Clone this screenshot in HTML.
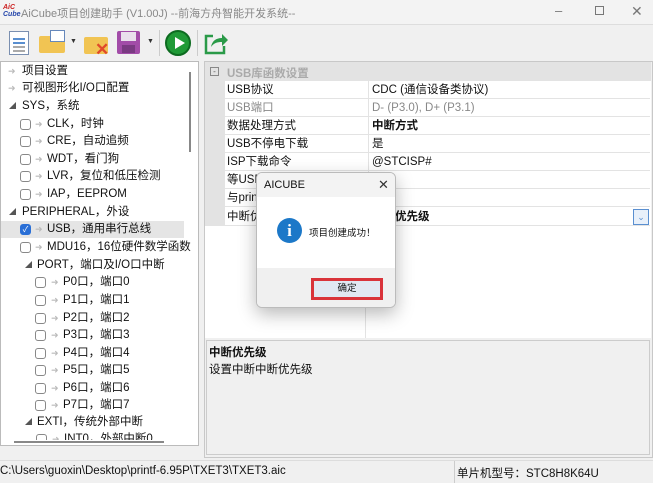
<!DOCTYPE html>
<html><head><meta charset="utf-8">
<style>
*{margin:0;padding:0;box-sizing:border-box}
body{width:653px;height:483px;overflow:hidden;background:#f0f0f0;font-family:"Liberation Sans","Microsoft YaHei","Noto Sans CJK SC",sans-serif;font-size:11.5px;color:#111;position:relative}
.a{position:absolute;white-space:nowrap}
.row{position:absolute;height:17px;line-height:17px;white-space:nowrap}
.cb{position:absolute;width:11px;height:11px;border:1px solid #888;border-radius:3px;background:#fff;top:3px}
.ar{position:absolute;color:#bbb;font-size:9px;top:0}
.tri{position:absolute;color:#555;font-size:7px;top:0}
.pr{position:absolute;left:225px;width:425px;height:18px;border-bottom:1px solid #e3e3e3;line-height:18px;background:#fff}
.pr .l{position:absolute;left:2px}
.pr .v{position:absolute;left:143px;border-left:1px solid #e3e3e3;height:18px;padding-left:3px}
</style></head><body>
<div class="a" style="left:0;top:0;width:653px;height:25px;background:#f3f3f3;border-bottom:1px solid #ddd"></div>
<div class="a" style="left:3px;top:4px;font-size:7px;line-height:7px;color:#c22;font-weight:bold;font-style:italic">AiC<br><span style="color:#24a">Cube</span></div>
<div class="a" style="left:21px;top:5px;font-size:11px;color:#888">AiCube项目创建助手 (V1.00J) --前海方舟智能开发系统--</div>
<div class="a" style="left:555px;top:3px;color:#777;font-size:13px">–</div>
<div class="a" style="left:595px;top:6px;width:9px;height:9px;border:1px solid #777"></div>
<div class="a" style="left:631px;top:3px;color:#777;font-size:14px">✕</div>
<div class="a" style="left:9px;top:31px;width:20px;height:24px;background:#fff;border:1px solid #7a8fb0"></div>
<div class="a" style="left:13px;top:38px;width:12px;height:2px;background:#5a8fd0;box-shadow:0 4px #5a8fd0,0 8px #aaa,0 12px #aaa"></div>
<div class="a" style="left:39px;top:36px;width:26px;height:17px;background:#f1c453;border-radius:2px"></div>
<div class="a" style="left:50px;top:30px;width:15px;height:12px;background:#fff;border:1px solid #68b"></div>
<div class="a" style="left:70px;top:38px;font-size:7px;color:#333">▼</div>
<div class="a" style="left:84px;top:37px;width:24px;height:17px;background:#f1c453;border-radius:2px"></div>
<div class="a" style="left:95px;top:40px;color:#e04a2a;font-size:17px;font-weight:bold">✕</div>
<div class="a" style="left:117px;top:31px;width:23px;height:23px;background:#a24ca8;border-radius:2px"></div>
<div class="a" style="left:121px;top:32px;width:15px;height:9px;background:#e9e0ec"></div>
<div class="a" style="left:122px;top:45px;width:13px;height:8px;background:#7a3a82"></div>
<div class="a" style="left:147px;top:38px;font-size:7px;color:#333">▼</div>
<div class="a" style="left:159px;top:30px;width:1px;height:26px;background:#ccc"></div>
<div class="a" style="left:165px;top:30px;width:26px;height:26px;border-radius:50%;background:#1f9a36;border:2px solid #0d6b20"></div>
<div class="a" style="left:175px;top:37px;width:0;height:0;border-left:10px solid #fff;border-top:6px solid transparent;border-bottom:6px solid transparent"></div>
<div class="a" style="left:197px;top:30px;width:1px;height:26px;background:#ccc"></div>
<svg class="a" style="left:203px;top:30px" width="26" height="26" viewBox="0 0 26 26"><path d="M10 6H3v17h18v-7" fill="none" stroke="#2a9a48" stroke-width="2.5"/><path d="M8 17c1-6 5-9 11-9V4l6 6-6 6v-4c-5 0-8 1-11 5z" fill="#2a9a48"/></svg>
<div class="a" style="left:0;top:61px;width:199px;height:385px;background:#fff;border:1px solid #bbb"></div>
<div class="a" style="left:189px;top:72px;width:2px;height:80px;background:#888"></div>
<div class="a" style="left:14px;top:441px;width:150px;height:2px;background:#888"></div>
<div style="font-size:11.5px">
<div class="row" style="top:63px;left:0"><span class="ar" style="left:8px">➜</span><span class="a" style="left:22px">项目设置</span></div>
<div class="row" style="top:80px;left:0"><span class="ar" style="left:8px">➜</span><span class="a" style="left:22px">可视图形化I/O口配置</span></div>
<div class="row" style="top:98px;left:0"><span class="tri" style="left:9px">◢</span><span class="a" style="left:22px">SYS，系统</span></div>
<div class="row" style="top:116px;left:0"><span class="cb" style="left:20px"></span><span class="ar" style="left:35px">➜</span><span class="a" style="left:47px">CLK，时钟</span></div>
<div class="row" style="top:133px;left:0"><span class="cb" style="left:20px"></span><span class="ar" style="left:35px">➜</span><span class="a" style="left:47px">CRE，自动追频</span></div>
<div class="row" style="top:151px;left:0"><span class="cb" style="left:20px"></span><span class="ar" style="left:35px">➜</span><span class="a" style="left:47px">WDT，看门狗</span></div>
<div class="row" style="top:168px;left:0"><span class="cb" style="left:20px"></span><span class="ar" style="left:35px">➜</span><span class="a" style="left:47px">LVR，复位和低压检测</span></div>
<div class="row" style="top:186px;left:0"><span class="cb" style="left:20px"></span><span class="ar" style="left:35px">➜</span><span class="a" style="left:47px">IAP，EEPROM</span></div>
<div class="row" style="top:204px;left:0"><span class="tri" style="left:9px">◢</span><span class="a" style="left:22px">PERIPHERAL，外设</span></div>
<div class="a" style="left:1px;top:221px;width:183px;height:17px;background:#e5e5e5"></div>
<div class="row" style="top:221px;left:0"><span class="cb" style="left:20px;background:#2a6fd6;border-color:#2a6fd6;color:#fff;font-size:8px;line-height:9px;text-align:center">✓</span><span class="ar" style="left:35px">➜</span><span class="a" style="left:47px">USB，通用串行总线</span></div>
<div class="row" style="top:239px;left:0"><span class="cb" style="left:20px"></span><span class="ar" style="left:35px">➜</span><span class="a" style="left:47px">MDU16，16位硬件数学函数</span></div>
<div class="row" style="top:257px;left:0"><span class="tri" style="left:25px">◢</span><span class="a" style="left:37px">PORT，端口及I/O口中断</span></div>
<div class="row" style="top:274px;left:0"><span class="cb" style="left:35px"></span><span class="ar" style="left:51px">➜</span><span class="a" style="left:63px">P0口，端口0</span></div>
<div class="row" style="top:292px;left:0"><span class="cb" style="left:35px"></span><span class="ar" style="left:51px">➜</span><span class="a" style="left:63px">P1口，端口1</span></div>
<div class="row" style="top:310px;left:0"><span class="cb" style="left:35px"></span><span class="ar" style="left:51px">➜</span><span class="a" style="left:63px">P2口，端口2</span></div>
<div class="row" style="top:327px;left:0"><span class="cb" style="left:35px"></span><span class="ar" style="left:51px">➜</span><span class="a" style="left:63px">P3口，端口3</span></div>
<div class="row" style="top:345px;left:0"><span class="cb" style="left:35px"></span><span class="ar" style="left:51px">➜</span><span class="a" style="left:63px">P4口，端口4</span></div>
<div class="row" style="top:362px;left:0"><span class="cb" style="left:35px"></span><span class="ar" style="left:51px">➜</span><span class="a" style="left:63px">P5口，端口5</span></div>
<div class="row" style="top:380px;left:0"><span class="cb" style="left:35px"></span><span class="ar" style="left:51px">➜</span><span class="a" style="left:63px">P6口，端口6</span></div>
<div class="row" style="top:397px;left:0"><span class="cb" style="left:35px"></span><span class="ar" style="left:51px">➜</span><span class="a" style="left:63px">P7口，端口7</span></div>
<div class="row" style="top:414px;left:0"><span class="tri" style="left:25px">◢</span><span class="a" style="left:37px">EXTI，传统外部中断</span></div>
<div class="a" style="left:1px;top:431px;width:197px;height:9px;overflow:hidden"><div class="row" style="top:0;left:0"><span class="cb" style="left:35px"></span><span class="ar" style="left:51px">➜</span><span class="a" style="left:63px">INT0，外部中断0</span></div></div>
</div>
<div class="a" style="left:204px;top:61px;width:449px;height:397px;border:1px solid #c8c8c8;background:#f0f0f0"></div>
<div class="a" style="left:205px;top:62px;width:446px;height:276px;background:#fff"></div>
<div class="a" style="left:205px;top:62px;width:446px;height:19px;background:#e3e3e3"></div>
<div class="a" style="left:205px;top:81px;width:20px;height:145px;background:#e3e3e3"></div>
<div class="a" style="left:210px;top:67px;width:9px;height:9px;border:1px solid #888;font-size:8px;line-height:7px;text-align:center;color:#555">-</div>
<div class="a" style="left:227px;top:65px;color:#aaa;font-weight:bold">USB库函数设置</div>
<div class="pr" style="top:81px"><span class="l">USB协议</span><span class="v">CDC (通信设备类协议)</span></div>
<div class="pr" style="top:99px;color:#888"><span class="l">USB端口</span><span class="v">D- (P3.0), D+ (P3.1)</span></div>
<div class="pr" style="top:117px"><span class="l">数据处理方式</span><span class="v" style="font-weight:bold">中断方式</span></div>
<div class="pr" style="top:135px"><span class="l">USB不停电下载</span><span class="v">是</span></div>
<div class="pr" style="top:153px"><span class="l">ISP下载命令</span><span class="v">@STCISP#</span></div>
<div class="pr" style="top:171px"><span class="l">等USB</span><span class="v"></span></div>
<div class="pr" style="top:189px"><span class="l">与prin</span><span class="v"></span></div>
<div class="pr" style="top:208px"><span class="l">中断优</span><span class="v" style="font-weight:bold">中断优先级</span></div>
<div class="a" style="left:633px;top:209px;width:16px;height:16px;border:1px solid #5a8fd0;background:#e8f0fa;color:#5a8fd0;font-size:9px;text-align:center;line-height:14px">⌄</div>
<div class="a" style="left:365px;top:226px;width:1px;height:112px;background:#e3e3e3"></div>
<div class="a" style="left:206px;top:340px;width:444px;height:115px;border:1px solid #ccc;background:#f0f0f0"></div>
<div class="a" style="left:209px;top:344px;font-weight:bold">中断优先级</div>
<div class="a" style="left:209px;top:361px">设置中断中断优先级</div>
<div class="a" style="left:0;top:460px;width:653px;height:23px;background:#f0f0f0;border-top:1px solid #ddd"></div>
<div class="a" style="left:454px;top:461px;width:1px;height:22px;background:#ccc"></div>
<div class="a" style="left:0;top:465px">C:\Users\guoxin\Desktop\printf-6.95P\TXET3\TXET3.aic</div>
<div class="a" style="left:457px;top:465px">单片机型号：STC8H8K64U</div>
<div class="a" style="left:256px;top:172px;width:140px;height:136px;background:#fff;border:1px solid #bbb;border-radius:6px;box-shadow:0 6px 18px rgba(0,0,0,0.28);overflow:hidden">
 <div class="a" style="left:0;top:0;width:140px;height:24px;background:#f3f3f3"></div>
 <div class="a" style="left:7px;top:6px;font-size:11px">AICUBE</div>
 <div class="a" style="left:121px;top:4px;font-size:13px;color:#333">✕</div>
 <div class="a" style="left:20px;top:45px;width:25px;height:25px;border-radius:50%;background:#1c78c8;color:#fff;text-align:center;font-size:17px;line-height:25px;font-family:'Liberation Serif',serif;font-weight:bold">i</div>
 <div class="a" style="left:52px;top:52px;font-size:9.5px">项目创建成功！</div>
 <div class="a" style="left:0;top:95px;width:140px;height:41px;background:#f0f0f0"></div>
 <div class="a" style="left:54px;top:105px;width:72px;height:22px;border:3px solid #d9333a;background:#e1e8f2;text-align:center;line-height:16px;font-size:9.5px">确定</div>
</div>
</body></html>
